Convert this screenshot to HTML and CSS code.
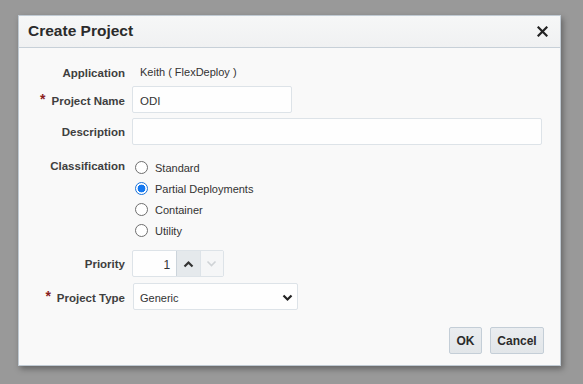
FILE: index.html
```html
<!DOCTYPE html>
<html>
<head>
<meta charset="utf-8">
<link rel="stylesheet" href="styles.css">
</head>
<body>
<div class="dialog">
  <div class="header">
    <span class="title">Create Project</span>
    <svg class="close" width="11" height="11" viewBox="0 0 11 11"><path d="M1.5 1.5 L9.5 9.5 M9.5 1.5 L1.5 9.5" stroke="#222" stroke-width="2.2" stroke-linecap="square"/></svg>
  </div>
  <div class="body">
    <div class="row r-app">
      <label class="lbl">Application</label>
      <div class="val">Keith ( FlexDeploy )</div>
    </div>
    <div class="row r-name">
      <label class="lbl"><span class="req">*</span>Project Name</label>
      <div class="input name">ODI</div>
    </div>
    <div class="row r-desc">
      <label class="lbl">Description</label>
      <div class="input desc"></div>
    </div>
    <div class="row r-class">
      <label class="lbl lbl-top">Classification</label>
      <div class="radios">
        <div class="radio"><span class="dot"></span>Standard</div>
        <div class="radio"><span class="dot on"></span>Partial Deployments</div>
        <div class="radio"><span class="dot"></span>Container</div>
        <div class="radio"><span class="dot"></span>Utility</div>
      </div>
    </div>
    <div class="row r-prio">
      <label class="lbl">Priority</label>
      <div class="spin">
        <div class="num">1</div>
        <div class="sbtn up"><svg width="11" height="8" viewBox="0 0 11 8"><path d="M1.5 6.5 L5.5 2.5 L9.5 6.5" fill="none" stroke="#333" stroke-width="2.2"/></svg></div>
        <div class="sbtn down"><svg width="11" height="8" viewBox="0 0 11 8"><path d="M1.5 1.5 L5.5 5.5 L9.5 1.5" fill="none" stroke="#cfd3d6" stroke-width="1.6"/></svg></div>
      </div>
    </div>
    <div class="row r-type">
      <label class="lbl"><span class="req">*</span>Project Type</label>
      <div class="select">Generic<svg width="11" height="8" viewBox="0 0 11 8"><path d="M1.5 1.5 L5.5 5.5 L9.5 1.5" fill="none" stroke="#222" stroke-width="2.2"/></svg></div>
    </div>
    <div class="buttons">
      <button class="btn ok">OK</button>
      <button class="btn cancel">Cancel</button>
    </div>
  </div>
</div>
</body>
</html>
```

FILE: styles.css
```css
html, body {
  margin: 0;
  padding: 0;
}
body {
  background: #999999;
  width: 583px;
  height: 384px;
  font-family: "Liberation Sans", Arial, sans-serif;
  color: #333;
  padding-top: 15px;
  padding-left: 18px;
  box-sizing: border-box;
}
.dialog {
  width: 543px;
  height: 351px;
  box-sizing: border-box;
  border: 1px solid #c0cad3;
  background: #f9f9f9;
  box-shadow: 2px 3px 6px rgba(0,0,0,0.35);
}
.header {
  height: 31px;
  border-bottom: 1px solid #c7d0d8;
  background: linear-gradient(#f6f7f7, #f0f1f2);
  display: flex;
  align-items: center;
  justify-content: space-between;
  padding: 0 12px 0 9px;
}
.title {
  font-size: 15.5px;
  font-weight: bold;
  color: #2b2b2b;
  padding-bottom: 1px;
}
.close {
  display: block;
}
.body {
  padding: 11px 18px 0 0;
  display: flex;
  flex-direction: column;
}
.row {
  display: grid;
  grid-template-columns: 106px 1fr;
  column-gap: 7px;
  align-items: center;
}
.r-app { height: 27px; }
.r-desc { margin-top: 5px; }
.r-class { margin-top: 12px; align-items: start; }
.r-prio { margin-top: 9px; }
.r-type { margin-top: 6px; }
.lbl {
  text-align: right;
  font-size: 11.5px;
  font-weight: bold;
  color: #3f3f3f;
  white-space: nowrap;
}
.lbl-top { line-height: 19px; }
.req {
  color: #8a1e1e;
  font-size: 14px;
  margin-right: 6px;
  position: relative;
  top: -1px;
}
.val {
  font-size: 11px;
  padding-left: 8px;
  margin-top: -2px;
}
.input {
  height: 27px;
  box-sizing: border-box;
  border: 1px solid #dde3e8;
  background: #fefefe;
  border-radius: 2px;
  font-size: 11.5px;
  display: flex;
  align-items: center;
  padding-left: 7px;
  padding-top: 2px;
}
.input.name { width: 160px; }
.input.desc { width: 410px; }
.radios {
  display: flex;
  flex-direction: column;
}
.radio {
  height: 21px;
  display: flex;
  align-items: center;
  font-size: 11px;
  color: #333;
}
.dot {
  width: 13px;
  height: 13px;
  box-sizing: border-box;
  border: 1px solid #6e6e6e;
  border-radius: 50%;
  background: #fff;
  margin-left: 3px;
  margin-right: 7px;
}
.dot.on {
  border-color: #1a73d9;
  background: radial-gradient(circle, #1478f0 0 3.6px, #fff 4.2px 100%);
}
.spin {
  display: flex;
  width: 92px;
  height: 27px;
  box-sizing: border-box;
  border: 1px solid #dde3e8;
  border-radius: 2px;
  background: #fefefe;
}
.num {
  width: 44px;
  text-align: right;
  font-size: 12px;
  padding-right: 6px;
  box-sizing: border-box;
  line-height: 28px;
}
.sbtn {
  width: 23px;
  display: flex;
  align-items: center;
  justify-content: center;
}
.sbtn.up {
  background: #e5e9ec;
  border-left: 1px solid #ccd4db;
  border-right: 1px solid #dde3e8;
}
.sbtn.down {
  background: #f5f6f7;
}
.select {
  width: 165px;
  height: 27px;
  box-sizing: border-box;
  border: 1px solid #dde3e8;
  border-radius: 2px;
  background: #fefefe;
  display: flex;
  align-items: center;
  justify-content: space-between;
  padding: 2px 4px 0 6px;
  font-size: 11px;
  margin-left: 1px;
}
.buttons {
  display: flex;
  justify-content: flex-end;
  gap: 8px;
  margin-top: 17px;
  margin-right: -2px;
}
.btn {
  height: 27px;
  box-sizing: border-box;
  border: 1px solid #c4ced7;
  border-radius: 2px;
  background: linear-gradient(#eaedf0, #e2e6e9);
  font-family: "Liberation Sans", Arial, sans-serif;
  font-weight: bold;
  font-size: 12px;
  color: #2b2b2b;
  padding: 0;
}
.btn.ok { width: 33px; }
.btn.cancel { width: 54px; }
```
